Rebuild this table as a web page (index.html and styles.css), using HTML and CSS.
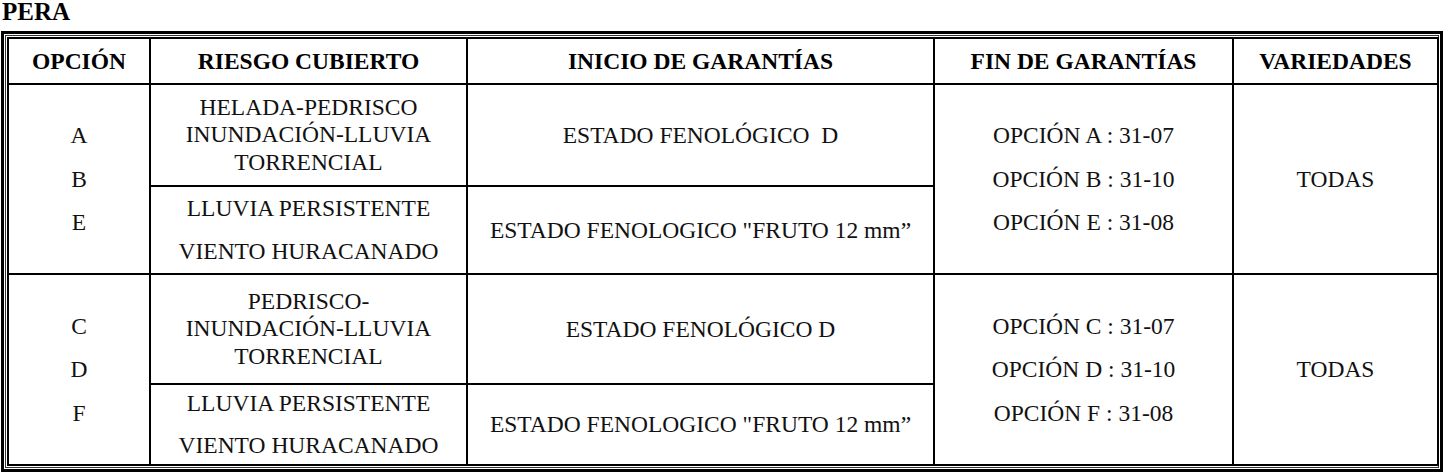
FILE: index.html
```html
<!DOCTYPE html>
<html lang="es">
<head>
<meta charset="utf-8">
<title>PERA</title>
<link rel="stylesheet" href="styles.css">
</head>
<body>
<h1 class="title">PERA</h1>
<div class="frame">
  <div class="frame-inner">
    <table class="grid">
      <colgroup>
        <col class="c1"><col class="c2"><col class="c3"><col class="c4"><col class="c5">
      </colgroup>
      <thead>
        <tr class="r-head">
          <th>OPCIÓN</th>
          <th>RIESGO CUBIERTO</th>
          <th>INICIO DE GARANTÍAS</th>
          <th>FIN DE GARANTÍAS</th>
          <th>VARIEDADES</th>
        </tr>
      </thead>
      <tbody>
        <tr class="r-g1a">
          <td rowspan="2"><div class="stack"><span>A</span><span>B</span><span>E</span></div></td>
          <td class="tight">HELADA-PEDRISCO<br>INUNDACIÓN-LLUVIA<br>TORRENCIAL</td>
          <td>ESTADO FENOLÓGICO &nbsp;D</td>
          <td rowspan="2"><div class="stack"><span>OPCIÓN A : 31-07</span><span>OPCIÓN B : 31-10</span><span>OPCIÓN E : 31-08</span></div></td>
          <td rowspan="2">TODAS</td>
        </tr>
        <tr class="r-g1b">
          <td><div class="stack"><span>LLUVIA PERSISTENTE</span><span>VIENTO HURACANADO</span></div></td>
          <td>ESTADO FENOLOGICO "FRUTO 12 mm”</td>
        </tr>
        <tr class="r-g2a">
          <td rowspan="2"><div class="stack"><span>C</span><span>D</span><span>F</span></div></td>
          <td class="tight">PEDRISCO-<br>INUNDACIÓN-LLUVIA<br>TORRENCIAL</td>
          <td>ESTADO FENOLÓGICO D</td>
          <td rowspan="2"><div class="stack"><span>OPCIÓN C : 31-07</span><span>OPCIÓN D : 31-10</span><span>OPCIÓN F : 31-08</span></div></td>
          <td rowspan="2">TODAS</td>
        </tr>
        <tr class="r-g2b">
          <td><div class="stack stack-close"><span>LLUVIA PERSISTENTE</span><span>VIENTO HURACANADO</span></div></td>
          <td>ESTADO FENOLOGICO "FRUTO 12 mm”</td>
        </tr>
      </tbody>
    </table>
  </div>
</div>
</body>
</html>
```

FILE: styles.css
```css
html, body {
  margin: 0;
  padding: 0;
  background: #ffffff;
  color: #000000;
  font-family: "Liberation Serif", "Times New Roman", serif;
}

.title {
  margin: 0 0 8px 0;
  padding-left: 2px;
  font-family: "Liberation Serif", "Times New Roman", serif;
  font-size: 25px;
  line-height: 23px;
  font-weight: bold;
}

.frame {
  margin-left: 1px;
  width: 1442px;
  box-sizing: border-box;
  border: 3px solid #000;
  padding: 1px;
}

.frame-inner {
  border: 1px solid #333;
  padding: 1px;
}

.grid {
  width: 1430px;
  border-collapse: collapse;
  table-layout: fixed;
  border: 2px solid #000;
}

.c1 { width: 142px; }
.c2 { width: 317px; }
.c3 { width: 467px; }
.c4 { width: 299px; }
.c5 { width: 205px; }

.grid th,
.grid td {
  border: 2px solid #000;
  padding: 0;
  text-align: center;
  vertical-align: middle;
  font-family: "Liberation Serif", "Times New Roman", serif;
  font-size: 23.5px;
  line-height: 27px;
  color: #111;
}

.grid th {
  font-weight: bold;
  color: #000;
}

.grid td.tight {
  line-height: 27.5px;
}

.stack {
  display: flex;
  flex-direction: column;
  align-items: center;
  gap: 16.5px;
  line-height: 27px;
}

.stack-close {
  gap: 15px;
}

.r-head { height: 46px; }
.r-g1a { height: 102px; }
.r-g1b { height: 88px; }
.r-g2a { height: 110px; }
.r-g2b { height: 81px; }
```
